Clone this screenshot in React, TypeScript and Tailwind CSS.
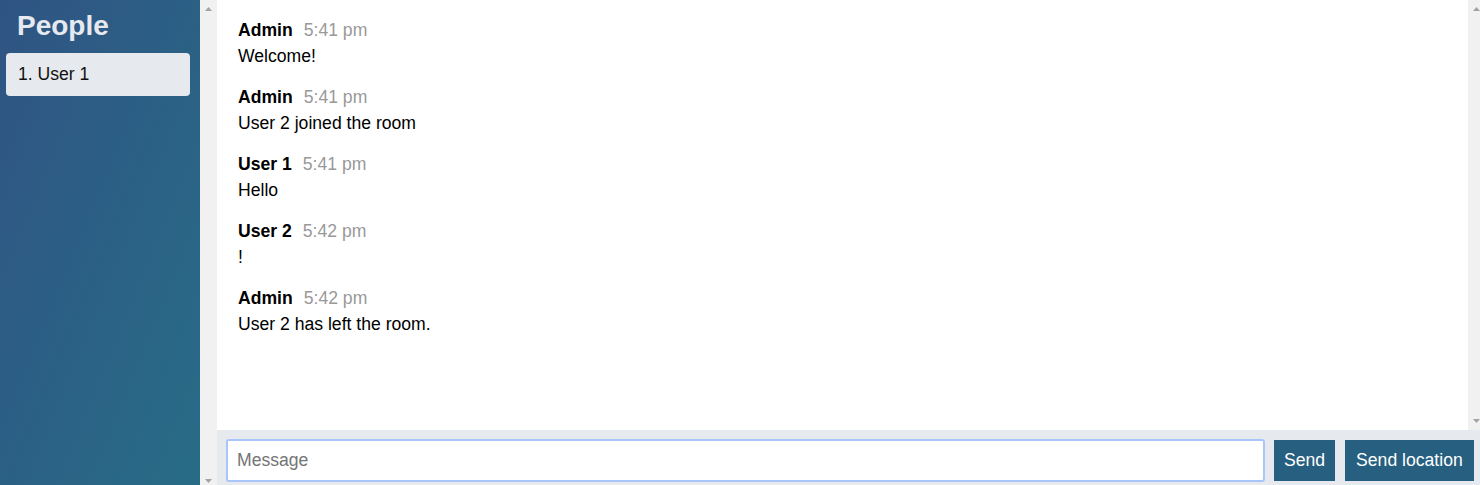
import React from "react";

const messages = [
  { name: "Admin", time: "5:41 pm", text: "Welcome!" },
  { name: "Admin", time: "5:41 pm", text: "User 2 joined the room" },
  { name: "User 1", time: "5:41 pm", text: "Hello" },
  { name: "User 2", time: "5:42 pm", text: "!" },
  { name: "Admin", time: "5:42 pm", text: "User 2 has left the room." },
];

function Arrow({ down }: { down?: boolean }) {
  return (
    <svg width="7" height="4" viewBox="0 0 7 4">
      {down ? <path d="M0 0H7L3.5 4z" fill="#a3a3a3" /> : <path d="M3.5 0L7 4H0z" fill="#a3a3a3" />}
    </svg>
  );
}

export default function App() {
  return (
    <div className="flex h-[485px] w-[1480px] overflow-hidden font-['Liberation_Sans',Arial,sans-serif] text-[17.6px]">
      {/* sidebar */}
      <aside className="flex w-[217px] shrink-0">
        <div className="w-[200px] bg-linear-to-br from-[#2f5483] to-[#276c87] pl-[6px] pr-[10px]">
          <h3 className="pl-[11px] pt-[10px] text-[28px] font-bold leading-[32px] text-[#e6eaf0]">People</h3>
          <ol>
            <li className="mt-[11px] flex h-[43px] items-center rounded-[4px] bg-[#e6e9ed] pl-[12px] text-[#111]">
              1. User 1
            </li>
          </ol>
        </div>
        <div className="flex w-[17px] flex-col items-center justify-between bg-[#f1f1f1] pb-[2px] pt-[7px]">
          <Arrow />
          <Arrow down />
        </div>
      </aside>

      {/* chat */}
      <main className="flex flex-1 flex-col">
        <div className="flex h-[430px]">
          <div className="flex-1 bg-white pl-[21px] pt-[18px]">
            {messages.map((m, i) => (
              <div key={i} className="mb-[16px]">
                <p className="flex leading-[25.5px]">
                  <span className="mr-[11px] font-bold text-black">{m.name}</span>
                  <span className="text-[#999]">{m.time}</span>
                </p>
                <p className="leading-[25.5px] text-black">{m.text}</p>
              </div>
            ))}
          </div>
          <div className="flex w-[12px] flex-col justify-between bg-[#f1f1f1] pb-[7px] pl-[5px] pt-[7px]">
            <Arrow />
            <Arrow down />
          </div>
        </div>
        <div className="flex flex-1 items-start bg-[#e6e9ed] pl-[9px] pt-[9px]">
          <input
            placeholder="Message"
            className="h-[43px] w-[1039px] rounded-[3px] border-2 border-[#a9c6fb] bg-white pl-[9px] text-black outline-none placeholder:text-[#757575]"
          />
          <button className="ml-[9px] mt-[1px] h-[41px] bg-[#265f80] px-[10px] text-white">Send</button>
          <button className="ml-[10px] mt-[1px] h-[41px] bg-[#265f80] px-[11px] text-white">Send location</button>
        </div>
      </main>
    </div>
  );
}
